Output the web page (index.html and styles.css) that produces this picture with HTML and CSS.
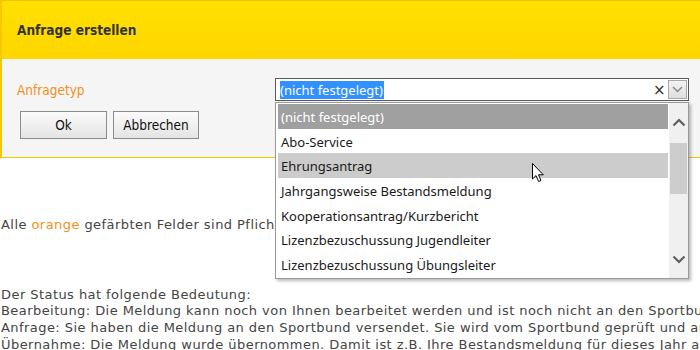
FILE: index.html
```html
<!DOCTYPE html>
<html lang="de">
<head>
<meta charset="utf-8">
<title>Anfrage erstellen</title>
<link rel="stylesheet" href="styles.css">
</head>
<body>
<div class="page">
  <div class="dialog">
    <div class="dlg-head"><h1 class="dlg-title">Anfrage erstellen</h1></div>
    <div class="dlg-body">
      <div class="field-row">
        <label class="field-label">Anfragetyp</label>
        <div class="combo">
          <div class="combo-input">
            <span class="combo-value">(nicht festgelegt)</span>
            <span class="combo-clear">×</span>
            <span class="combo-btn">
              <svg width="11" height="7" viewBox="0 0 11 7"><path d="M1 1 L5.5 5.5 L10 1" fill="none" stroke="#8a8a8a" stroke-width="1.5"/></svg>
            </span>
          </div>
          <div class="listbox">
            <ul class="list-items">
              <li class="item item-selected">(nicht festgelegt)</li>
              <li class="item">Abo-Service</li>
              <li class="item item-hover">Ehrungsantrag</li>
              <li class="item">Jahrgangsweise Bestandsmeldung</li>
              <li class="item">Kooperationsantrag/Kurzbericht</li>
              <li class="item">Lizenzbezuschussung Jugendleiter</li>
              <li class="item">Lizenzbezuschussung Übungsleiter</li>
            </ul>
            <div class="scrollbar">
              <span class="sb-arrow">
                <svg width="14" height="9" viewBox="0 0 14 9"><path d="M1.5 7.5 L7 2 L12.5 7.5" fill="none" stroke="#5f5f5f" stroke-width="2.2"/></svg>
              </span>
              <div class="sb-track"><div class="sb-thumb"></div></div>
              <span class="sb-arrow">
                <svg width="14" height="9" viewBox="0 0 14 9"><path d="M1.5 1.5 L7 7 L12.5 1.5" fill="none" stroke="#5f5f5f" stroke-width="2.2"/></svg>
              </span>
            </div>
          </div>
        </div>
      </div>
      <div class="buttons">
        <button class="btn">Ok</button>
        <button class="btn">Abbrechen</button>
      </div>
    </div>
  </div>

  <p class="hint">Alle <span class="orange">orange</span> gefärbten Felder sind Pflichtfelder.</p>

  <div class="status">
    <div class="status-line">Der Status hat folgende Bedeutung:</div>
    <div class="status-line">Bearbeitung: Die Meldung kann noch von Ihnen bearbeitet werden und ist noch nicht an den Sportbund versendet.</div>
    <div class="status-line">Anfrage: Sie haben die Meldung an den Sportbund versendet. Sie wird vom Sportbund geprüft und anschließend übernommen.</div>
    <div class="status-line">Übernahme: Die Meldung wurde übernommen. Damit ist z.B. Ihre Bestandsmeldung für dieses Jahr abgeschlossen.</div>
  </div>

  <svg class="cursor" width="13" height="20" viewBox="0 0 13 20">
    <path d="M0.5 0.5 L0.5 16 L4 12.6 L6.6 18.5 L9 17.4 L6.5 11.8 L11.3 11.8 Z" fill="#fff" stroke="#000" stroke-width="1" stroke-linejoin="miter"/>
  </svg>
</div>
</body>
</html>
```

FILE: styles.css
```css
html, body {
  margin: 0;
  padding: 0;
  background: #ffffff;
  overflow: hidden;
}

.page {
  position: relative;
  width: 700px;
  height: 350px;
  overflow: hidden;
}

.dialog {
  width: 760px;
  border-left: 2px solid #f7c800;
  border-top: 1px solid #f2c200;
  border-bottom: 1px solid #f7c800;
  font-family: "DejaVu Sans Condensed", "Liberation Sans", sans-serif;
}

.dlg-head {
  height: 58px;
  background: linear-gradient(#ffe000, #ffd600);
  display: flex;
  align-items: center;
  padding-left: 15px;
}

.dlg-title {
  margin: 0;
  font-size: 13.5px;
  font-weight: bold;
  color: #333333;
}

.dlg-body {
  background: #f5f5f5;
  padding: 19px 0 17px 15px;
  height: 62px;
}

.field-row {
  display: grid;
  grid-template-columns: 258px 414px;
  align-items: center;
}

.field-label {
  color: #f39019;
  font-size: 13.5px;
  padding-top: 1px;
}

.combo {
  position: relative;
}

.combo-input {
  height: 21px;
  border: 1px solid #5a5a5a;
  background: #fff;
  display: flex;
  align-items: center;
  padding-left: 4px;
  padding-right: 1px;
}

.combo-value {
  display: block;
  flex: 1;
  font-family: "Noto Sans", "Open Sans", sans-serif;
  font-size: 13px;
  line-height: 18px;
  color: #fff;
  background: linear-gradient(#3390ff, #3390ff) no-repeat left top / 104px 18px;
}

.combo-clear {
  font-family: "DejaVu Sans", sans-serif;
  font-size: 15px;
  color: #333;
  width: 14px;
  margin-right: 1px;
  line-height: 18px;
}

.combo-btn {
  width: 17px;
  height: 17px;
  border: 1px solid #a8a8a8;
  background: linear-gradient(#f3f3f3, #dedede);
  display: flex;
  align-items: center;
  justify-content: center;
}

.listbox {
  position: absolute;
  top: 24px;
  left: 0;
  width: 412px;
  height: 175px;
  border: 1px solid #9a9a9a;
  background: #fff;
  box-shadow: 2px 2px 3px rgba(0, 0, 0, 0.28);
  display: flex;
  z-index: 5;
}

.list-items {
  list-style: none;
  margin: 0;
  padding: 1px 0 0 2px;
  flex: 1;
}

.item {
  height: 24.7px;
  line-height: 26px;
  padding-left: 3px;
  font-family: "Noto Sans", "Open Sans", sans-serif;
  font-size: 13px;
  color: #1a1a1a;
  white-space: nowrap;
}

.item-selected {
  background: #a0a0a0;
  color: #ffffff;
}

.item-hover {
  background: #cccccc;
}

.scrollbar {
  width: 19px;
  background: #f0f0f0;
  display: flex;
  flex-direction: column;
  align-items: center;
  margin-left: 1px;
}

.sb-arrow {
  height: 38px;
  display: flex;
  align-items: center;
  justify-content: center;
}

.sb-track {
  flex: 1;
  width: 100%;
}

.sb-thumb {
  height: 51px;
  margin: 2px 1px 0 1px;
  background: #cdcdcd;
}

.buttons {
  display: flex;
  gap: 6px;
  margin-top: 10px;
  margin-left: 3px;
}

.btn {
  width: 87px;
  height: 28px;
  border: 1px solid #8c8c8c;
  background: linear-gradient(#fbfbfb, #e4e4e4);
  font-family: "DejaVu Sans Condensed", "Liberation Sans", sans-serif;
  font-size: 13.5px;
  color: #111;
  padding: 0;
}

.btn + .btn {
  width: 86px;
}

.hint {
  margin: 59px 0 0 1px;
  font-family: "DejaVu Sans", "Verdana", sans-serif;
  font-size: 13px;
  letter-spacing: 0.44px;
  line-height: 16.7px;
  color: #444;
  white-space: nowrap;
}

.orange {
  color: #f39019;
}

.status {
  margin: 53px 0 0 1px;
  font-family: "DejaVu Sans", "Verdana", sans-serif;
  font-size: 13px;
  letter-spacing: 0.44px;
  line-height: 16.7px;
  color: #444;
  white-space: nowrap;
}

.cursor {
  position: absolute;
  left: 532px;
  top: 163px;
  z-index: 10;
}
```
